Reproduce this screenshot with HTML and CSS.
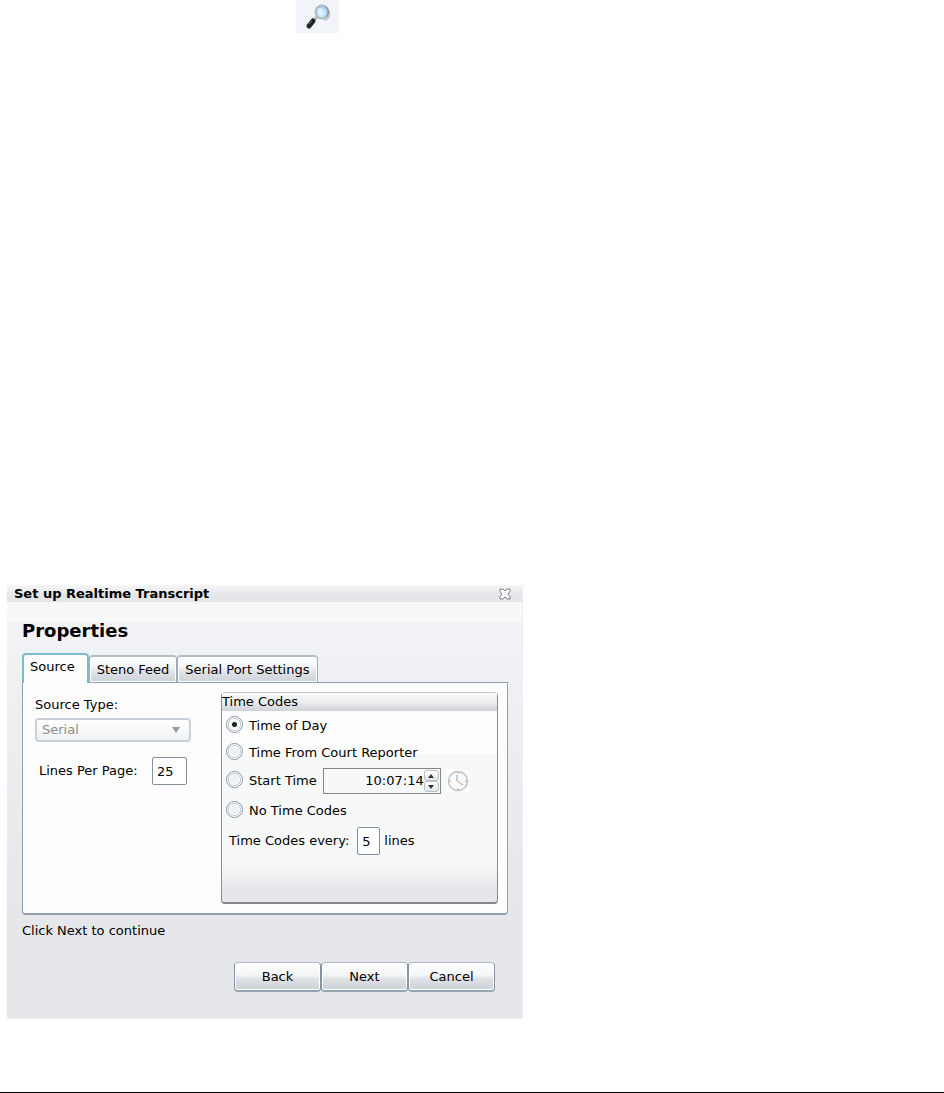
FILE: index.html
```html
<!DOCTYPE html>
<html lang="en">
<head>
  <meta charset="UTF-8" />
  <meta name="viewport" content="width=device-width, initial-scale=1.0"/>
  <title>Set up Realtime Transcript</title>
  <link rel="stylesheet" href="styles.css">
</head>
<body>

  <button class="search-btn" type="button" aria-label="Search">
    <svg width="43" height="33" viewBox="0 0 43 33">
      <defs>
        <radialGradient id="lens" cx="45%" cy="60%" r="55%">
          <stop offset="0" stop-color="#e8f6ff"/>
          <stop offset="0.6" stop-color="#bfe0fa"/>
          <stop offset="1" stop-color="#9cc2e6"/>
        </radialGradient>
      </defs>
      <path d="M28 20c4-1 6-4 5-8" fill="none" stroke="#c3c6ca" stroke-width="2"/>
      <path d="M21 17 L17 21" stroke="#b3b5b8" stroke-width="3"/>
      <path d="M17 21 L13 26" stroke="#222" stroke-width="5" stroke-linecap="round"/>
      <path d="M16 21 L13 24" stroke="#777" stroke-width="1"/>
      <circle cx="26" cy="12" r="6.500" fill="url(#lens)" stroke="#b4b9bf" stroke-width="2"/>
      <path d="M30 7c3 3 3 7 0 10" fill="none" stroke="#7d8288" stroke-width="1"/>
      <circle cx="24" cy="10" r="2" fill="#fff" opacity="0.5"/>
    </svg>
  </button>

  <form class="dialog">
    <div class="title-bar">
      <span>Set up Realtime Transcript</span>
      <button class="close-btn" type="button" aria-label="Close">
        <svg width="12" height="12" viewBox="0 0 12 12">
          <path d="M1 1h3l2 2 2-2h3v2.500L9 6l2 2.500V11H8L6 9l-2 2H1V8.500L3 6 1 3.500z" fill="#fafafa" stroke="#7c7e81" stroke-width="1"/>
        </svg>
      </button>
    </div>

    <div class="dialog-body">
      <h1>Properties</h1>

      <div class="tabs">
        <button class="tab active" type="button">Source</button>
        <button class="tab" type="button">Steno Feed</button>
        <button class="tab" type="button">Serial Port Settings</button>
      </div>

      <div class="panel">
        <div class="source">
          <label for="source-type">Source Type:</label>
          <div class="select-box">
            <select id="source-type" disabled>
              <option>Serial</option>
            </select>
            <svg class="arrow" width="8" height="6" viewBox="0 0 8 6"><path d="M0 0h8L4 6z" fill="#9a9a9a"/></svg>
          </div>
          <div class="lines-row">
            <label for="lines-page">Lines Per Page:</label>
            <input class="num" type="text" id="lines-page" value="25">
          </div>
        </div>

        <div class="group" role="group" aria-labelledby="time-codes">
          <h2 id="time-codes">Time Codes</h2>
          <div class="row">
            <input type="radio" name="time" id="time-day" checked>
            <label for="time-day">Time of Day</label>
          </div>
          <div class="row">
            <input type="radio" name="time" id="time-reporter">
            <label for="time-reporter">Time From Court Reporter</label>
          </div>
          <div class="row tall">
            <input type="radio" name="time" id="time-start">
            <label for="time-start">Start Time</label>
            <div class="spinner">
              <input type="text" value="10:07:14" aria-label="Start time value">
              <div class="spin-btns">
                <button type="button" aria-label="Up"><svg width="6" height="4" viewBox="0 0 6 4"><path d="M3 0l3 4H0z" fill="#333"/></svg></button>
                <button type="button" aria-label="Down"><svg width="6" height="4" viewBox="0 0 6 4"><path d="M0 0h6L3 4z" fill="#333"/></svg></button>
              </div>
            </div>
            <svg class="clock" width="22" height="22" viewBox="0 0 22 22">
              <rect width="22" height="22" fill="#fcfcfc"/>
              <circle cx="11" cy="11" r="9.500" fill="#fafafa" stroke="#c2c2c6" stroke-width="1.500"/>
              <path d="M11 2v2M11 18v2M2 11h2M18 11h2" stroke="#aaa"/>
              <path d="M10 5v6" stroke="#b5bac4" stroke-width="1.500"/>
              <path d="M10 11l6 4" stroke="#e3b9a0" stroke-width="1.500"/>
            </svg>
          </div>
          <div class="row tall">
            <input type="radio" name="time" id="time-none">
            <label for="time-none">No Time Codes</label>
          </div>
          <div class="row tall every-row">
            <label for="every">Time Codes every:</label>
            <input class="num small" type="text" id="every" value="5">
            <span>lines</span>
          </div>
        </div>
      </div>

      <p class="hint">Click Next to continue</p>

      <div class="actions">
        <button type="button">Back</button>
        <button type="button">Next</button>
        <button type="button">Cancel</button>
      </div>
    </div>
  </form>

</body>
</html>
```

FILE: styles.css
```css
* {
  box-sizing: border-box;
}
body {
  font-family: "DejaVu Sans", Verdana, sans-serif;
  font-size: 13px;
  line-height: 16px;
  color: #000;
  background-color: #fff;
  margin: 0;
  min-height: 100vh;
  display: flex;
  flex-direction: column;
  align-items: flex-start;
  border-bottom: 1px solid #000;
}
button, input, select {
  font: inherit;
  color: inherit;
  margin: 0;
  padding: 0;
}
svg {
  display: block;
}
.search-btn {
  margin-left: 296px;
  border: none;
  background-color: #f1f5fa;
}
.dialog {
  width: 100%;
  max-width: 516px;
  margin: auto 0 73px 7px;
  background: linear-gradient(#f3f4f6, #e5e7eb 75%);
  border-right: 1px solid #eeeff1;
  border-bottom: 1px solid #eeeff1;
}
.title-bar {
  display: flex;
  justify-content: space-between;
  align-items: center;
  height: 17px;
  padding: 0 11px 0 7px;
  font-weight: bold;
  background: linear-gradient(#f6f6f7, #e4e6ea 60%);
}
.close-btn {
  border: none;
  background: none;
}
.dialog-body {
  padding: 18px 14px 26px 15px;
  background: linear-gradient(#f7f9f9, #f7f9f9) 0 0 / 100% 20px no-repeat;
}
h1 {
  font-size: 18px;
  line-height: 22px;
  margin: 0 0 11px;
}
.tabs {
  display: flex;
  align-items: flex-end;
}
.tab {
  height: 27px;
  padding: 0 7px;
  border: 1px solid #9fabb8;
  border-top: 2px solid #b4bec8;
  border-bottom: none;
  border-radius: 4px 4px 0 0;
  background: linear-gradient(#fff, #f3f5f6 40%, #dfe2e6 60%, #cdd2d8);
  box-shadow: inset 0 0 0 1px #fff;
}
.tab.active {
  position: relative;
  height: 30px;
  margin-bottom: -1px;
  padding: 0 12px 4px 6px;
  border: 2px solid #78bccd;
  border-bottom: none;
  background: #fdfdfd;
}
.panel {
  display: flex;
  justify-content: space-between;
  padding: 9px;
  border: 1px solid #8fa0b0;
  border-bottom-width: 2px;
  border-radius: 0 0 4px 4px;
  background-color: #fdfdfd;
}
.source {
  padding: 5px 0 0 3px;
}
.select-box {
  position: relative;
  width: 156px;
  margin-top: 5px;
}
.select-box select {
  appearance: none;
  display: block;
  width: 100%;
  height: 24px;
  padding: 0 5px;
  border: 2px solid #c9d0d8;
  border-radius: 4px;
  background: linear-gradient(#fff, #f7f8f9 50%, #eff1f2);
  color: #8e8e8e;
  opacity: 1;
}
.arrow {
  position: absolute;
  right: 11px;
  top: 9px;
}
.lines-row {
  display: flex;
  align-items: center;
  justify-content: space-between;
  padding: 0 4px;
  margin-top: 15px;
}
.num {
  width: 35px;
  height: 28px;
  padding-left: 4px;
  border: 1px solid #8291a0;
  border-radius: 2px;
  background-color: #fff;
}
.num.small {
  width: 23px;
}
.group {
  width: 277px;
  height: 212px;
  border: 1px solid #8a8a8a;
  border-top-color: #c3c6c9;
  border-bottom: 2px solid #858585;
  border-radius: 4px;
  background: linear-gradient(#fdfdfd 61px, #f7f9f9 62px, #f7f9f9 170px, #e4e6ea 198px);
}
.group h2 {
  height: 18px;
  margin: 0 0 1px;
  padding-top: 1px;
  font-size: 13px;
  font-weight: normal;
  background: linear-gradient(#fafafa, #eceef0 50%, #cfd2d6);
}
.row {
  display: flex;
  align-items: center;
  gap: 6px;
  height: 27px;
  padding-left: 4px;
}
.row.tall {
  height: 30px;
}
.row input[type="radio"] {
  appearance: none;
  width: 17px;
  height: 17px;
  margin-bottom: 3px;
  border: 1px solid #8795a5;
  border-radius: 50%;
  background: radial-gradient(circle, #eef0f2 4px, #fff 5px, #c3cad2 6px, #fff 7px);
}
.row input[type="radio"]:checked {
  background: radial-gradient(circle, #222 2px, #eef0f2 3px, #fff 5px, #c3cad2 6px, #fff 7px);
}
.spinner {
  display: flex;
  width: 118px;
  height: 26px;
  padding: 1px;
  border: 1px solid #858585;
  background-color: #f7f9f9;
}
.spinner input {
  flex: 1;
  min-width: 0;
  border: none;
  background: none;
  text-align: right;
}
.spin-btns {
  display: flex;
  flex-direction: column;
}
.spin-btns button {
  display: flex;
  align-items: center;
  justify-content: center;
  width: 15px;
  height: 11px;
  border: 1px solid #b8bec6;
  border-radius: 3px;
  background: linear-gradient(#fff, #e3e6ea);
}
.row.every-row {
  gap: 4px;
  padding-left: 7px;
}
.every-row label {
  margin-right: 4px;
}
.hint {
  margin: 8px 0 23px;
}
.actions {
  display: flex;
  justify-content: flex-end;
  padding-right: 13px;
}
.actions button {
  width: 87px;
  height: 30px;
  border: 1px solid #8494a3;
  border-top-color: #b0bac4;
  border-bottom: 2px solid #95a4b1;
  border-radius: 4px;
  background: linear-gradient(#fff, #f3f5f6 45%, #dde1e5 60%, #cdd2d8);
  box-shadow: inset 0 0 0 1px #fff;
}
```
